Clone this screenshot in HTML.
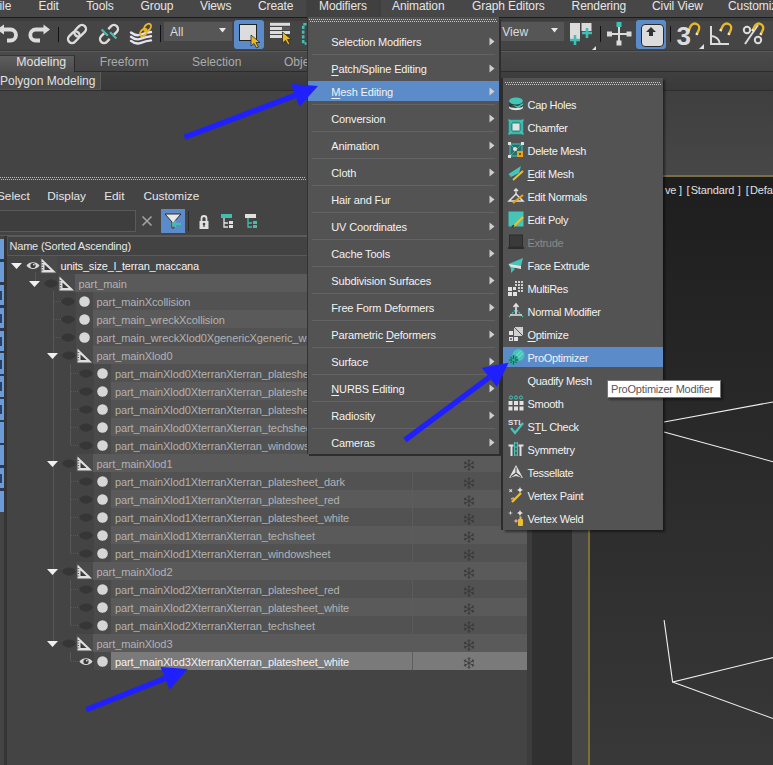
<!DOCTYPE html>
<html><head><meta charset="utf-8"><style>
html,body{margin:0;padding:0;}
body{width:773px;height:765px;overflow:hidden;position:relative;background:#444;font-family:"Liberation Sans", sans-serif;}
.t{position:absolute;white-space:nowrap;}
svg{overflow:visible;}
</style></head><body>
<div style="position:absolute;left:0px;top:0px;width:773px;height:765px;background:#444444;"></div>
<div style="position:absolute;left:0px;top:0px;width:773px;height:17px;background:#474747;"></div>
<div style="position:absolute;left:306px;top:0px;width:75px;height:17px;background:linear-gradient(90deg,#3f3f3f,#444 50%,#3f3f3f);"></div>
<div class="t" style="left:-7.7px;top:-0.16px;font-size:12px;line-height:12px;color:#e6e6e6;letter-spacing:-0.1px;">File</div>
<div class="t" style="left:38.5px;top:-0.16px;font-size:12px;line-height:12px;color:#e6e6e6;letter-spacing:-0.1px;">Edit</div>
<div class="t" style="left:86.2px;top:-0.16px;font-size:12px;line-height:12px;color:#e6e6e6;letter-spacing:-0.1px;">Tools</div>
<div class="t" style="left:140.5px;top:-0.16px;font-size:12px;line-height:12px;color:#e6e6e6;letter-spacing:-0.1px;">Group</div>
<div class="t" style="left:200px;top:-0.16px;font-size:12px;line-height:12px;color:#e6e6e6;letter-spacing:-0.1px;">Views</div>
<div class="t" style="left:258px;top:-0.16px;font-size:12px;line-height:12px;color:#e6e6e6;letter-spacing:-0.1px;">Create</div>
<div class="t" style="left:319px;top:-0.16px;font-size:12px;line-height:12px;color:#e6e6e6;letter-spacing:-0.1px;">Modifiers</div>
<div class="t" style="left:392px;top:-0.16px;font-size:12px;line-height:12px;color:#e6e6e6;letter-spacing:-0.1px;">Animation</div>
<div class="t" style="left:472px;top:-0.16px;font-size:12px;line-height:12px;color:#e6e6e6;letter-spacing:-0.1px;">Graph Editors</div>
<div class="t" style="left:571.6px;top:-0.16px;font-size:12px;line-height:12px;color:#e6e6e6;letter-spacing:-0.1px;">Rendering</div>
<div class="t" style="left:652px;top:-0.16px;font-size:12px;line-height:12px;color:#e6e6e6;letter-spacing:-0.1px;">Civil View</div>
<div class="t" style="left:728px;top:-0.16px;font-size:12px;line-height:12px;color:#e6e6e6;letter-spacing:-0.1px;">Customize</div>
<div style="position:absolute;left:0px;top:17px;width:773px;height:1px;background:#1c1c1c;"></div>
<div style="position:absolute;left:0px;top:18px;width:773px;height:33px;background:#454545;"></div>
<div style="position:absolute;left:0px;top:18px;width:773px;height:3px;background:#3d3d3d;"></div>
<div style="position:absolute;left:0px;top:50px;width:773px;height:1px;background:#3a3a3a;"></div>
<svg style="position:absolute;left:0px;top:18px;" width="60" height="33" viewBox="0 0 60 33"><path d="M3 11.5H10.5A5.5 5.5 0 0 1 10.5 22.5H7" stroke="#dcdcdc" stroke-width="3.8" fill="none"/><path d="M-3 11.5L4 6.5V16.5Z" fill="#dcdcdc"/><path d="M45 11.5H35.8A5.5 5.5 0 0 0 35.8 22.5H40" stroke="#dcdcdc" stroke-width="3.8" fill="none"/><path d="M50 11.5L43.5 6.5V16.5Z" fill="#dcdcdc"/></svg>
<div style="position:absolute;left:58px;top:27px;width:1px;height:15px;background:#111111;"></div>
<svg style="position:absolute;left:63px;top:20px;" width="28" height="28" viewBox="0 0 28 28"><g transform="rotate(-45 14 14)"><rect x="3" y="10" width="13" height="8" rx="4" stroke="#dcdcdc" stroke-width="2.4" fill="none"/><rect x="12" y="10" width="13" height="8" rx="4" stroke="#dcdcdc" stroke-width="2.4" fill="none"/></g></svg>
<svg style="position:absolute;left:95px;top:20px;" width="28" height="28" viewBox="0 0 28 28"><g transform="rotate(-45 14 14)"><path d="M11 10H7A4 4 0 0 0 7 18H11" stroke="#dcdcdc" stroke-width="2.4" fill="none"/><path d="M17 10H21A4 4 0 0 1 21 18H17" stroke="#dcdcdc" stroke-width="2.4" fill="none"/><path d="M12 5.5V14.5M16 13.5V22.5" stroke="#3fc0b2" stroke-width="2.2"/></g></svg>
<svg style="position:absolute;left:128px;top:18px;" width="26" height="28" viewBox="0 0 26 28"><g stroke="#e6e4f0" stroke-width="2.4" fill="none" stroke-linecap="round"><path d="M3 14.5Q8 18.5 13 16.5T23 14"/><path d="M3 18.7Q8 22.7 13 20.7T23 18.2"/><path d="M3 22.9Q8 26.9 13 24.9T23 22.4"/></g><g stroke="#e8b828" stroke-width="1.9" fill="none"><ellipse cx="15.5" cy="14.5" rx="2.8" ry="4.3" transform="rotate(40 15.5 14.5)"/><ellipse cx="19.5" cy="9.5" rx="2.8" ry="4.3" transform="rotate(40 19.5 9.5)"/></g></svg>
<div style="position:absolute;left:160px;top:25px;width:1px;height:17px;background:#111111;"></div>
<div style="position:absolute;left:164px;top:22px;width:68px;height:19px;background:#565656;"></div>
<div class="t" style="left:170px;top:25.84px;font-size:12px;line-height:12px;color:#dcdcdc;">All</div>
<svg style="position:absolute;left:219px;top:28px;" width="7" height="5" viewBox="0 0 7 5"><path d="M0 0H7L3.5 4.5Z" fill="#e8e8e8"/></svg>
<div style="position:absolute;left:234px;top:20px;width:30px;height:29px;background:#5b8cc9;border-radius:3px;"></div>
<div style="position:absolute;left:238.5px;top:23.5px;width:18.5px;height:17.5px;background:#dcdcdc;border:1.5px solid #222;box-sizing:border-box;"></div>
<svg style="position:absolute;left:251px;top:35px;" width="10" height="14" viewBox="0 0 10 14"><path d="M0 0L0 11L3 8.5L5.5 13L7.5 12L5 7.5L9 7.5Z" fill="#e8b828" stroke="#2a2a2a" stroke-width="0.8"/></svg>
<svg style="position:absolute;left:270px;top:22px;" width="22" height="24" viewBox="0 0 22 24"><g fill="#dcdcdc"><rect x="0" y="0.8" width="20" height="3"/><rect x="0" y="5" width="12" height="3"/><rect x="0" y="9" width="20" height="3"/><rect x="0" y="13" width="12" height="3"/></g><rect x="12" y="5" width="8" height="3" fill="#5a5a5a"/><g transform="translate(12.5 10)"><path d="M0 0L0 11L3 8.5L5.5 13L7.5 12L5 7.5L9 7.5Z" fill="#e8b828" stroke="#2a2a2a" stroke-width="0.8"/></g></svg>
<svg style="position:absolute;left:300px;top:22px;" width="8" height="24" viewBox="0 0 8 24"><path d="M6.5 2.2H3.2V21.5H6.5" stroke="#3fc0b2" stroke-width="2.6" stroke-dasharray="3.2 1.6" fill="none"/></svg>
<div style="position:absolute;left:499px;top:22px;width:65px;height:19px;background:#565656;"></div>
<div class="t" style="left:502.3px;top:25.84px;font-size:12px;line-height:12px;color:#dcdcdc;">View</div>
<svg style="position:absolute;left:551px;top:28px;" width="7" height="5" viewBox="0 0 7 5"><path d="M0 0H7L3.5 4.5Z" fill="#e8e8e8"/></svg>
<svg style="position:absolute;left:568px;top:22px;" width="32" height="28" viewBox="0 0 32 28"><rect x="2" y="1" width="10" height="16" fill="#dcdcdc"/><rect x="13.5" y="1" width="10" height="8" fill="#dcdcdc"/><path d="M7 13V23M2 18H12" stroke="#3fc0b2" stroke-width="2.6"/><path d="M19 6V16M14 11H24" stroke="#3fc0b2" stroke-width="2.6"/><path d="M28 24V28H24Z" fill="#e0e0e0"/></svg>
<div style="position:absolute;left:600px;top:26px;width:1px;height:16px;background:#111111;"></div>
<svg style="position:absolute;left:606px;top:21px;" width="26" height="26" viewBox="0 0 26 26"><path d="M13 4V21M3 13H23" stroke="#dcdcdc" stroke-width="2"/><rect x="10.5" y="1" width="5" height="5" fill="#3fc0b2"/><rect x="10.5" y="19.5" width="5" height="5" fill="#dcdcdc"/><rect x="1" y="10.5" width="5" height="5" fill="#dcdcdc"/><rect x="20.5" y="10.5" width="5" height="5" fill="#dcdcdc"/></svg>
<div style="position:absolute;left:636px;top:20px;width:30px;height:29px;background:#5b8cc9;border-radius:3px;"></div>
<div style="position:absolute;left:640.5px;top:24px;width:23px;height:22.5px;background:#dcdcdc;border:1.5px solid #2a2a2a;border-radius:4px;box-sizing:border-box;"></div>
<svg style="position:absolute;left:645px;top:27px;" width="12" height="10" viewBox="0 0 12 10"><path d="M6 0L11 5H8V9H4V5H1Z" fill="#333"/></svg>
<div style="position:absolute;left:670px;top:26px;width:1px;height:16px;background:#111111;"></div>
<div class="t" style="left:676.5px;top:22.79px;font-size:26px;line-height:26px;color:#dcdcdc;font-weight:bold;">3</div>
<svg style="position:absolute;left:688px;top:22px;" width="13" height="13" viewBox="0 0 13 13"><g transform="rotate(25 6.5 6.5)"><path d="M2 11V6A4.5 4.5 0 0 1 11 6V11" stroke="#e8b828" stroke-width="2.4" fill="none"/><path d="M2 9.5V11.5M11 9.5V11.5" stroke="#e8e8e8" stroke-width="2.4"/></g></svg>
<svg style="position:absolute;left:699px;top:44px;" width="5" height="5" viewBox="0 0 5 5"><path d="M5 0V5H0Z" fill="#e0e0e0"/></svg>
<svg style="position:absolute;left:709px;top:22px;" width="24" height="24" viewBox="0 0 24 24"><path d="M2 4V22H20" stroke="#dcdcdc" stroke-width="2" fill="none"/><path d="M2 14A9 9 0 0 1 11 22" stroke="#dcdcdc" stroke-width="2" fill="none"/></svg>
<svg style="position:absolute;left:720px;top:22px;" width="13" height="13" viewBox="0 0 13 13"><g transform="rotate(25 6.5 6.5)"><path d="M2 11V6A4.5 4.5 0 0 1 11 6V11" stroke="#e8b828" stroke-width="2.4" fill="none"/><path d="M2 9.5V11.5M11 9.5V11.5" stroke="#e8e8e8" stroke-width="2.4"/></g></svg>
<svg style="position:absolute;left:741px;top:22px;" width="26" height="24" viewBox="0 0 26 24"><circle cx="6" cy="8" r="3.2" stroke="#dcdcdc" stroke-width="2" fill="none"/><circle cx="17" cy="18" r="3.2" stroke="#dcdcdc" stroke-width="2" fill="none"/><path d="M4 22L17 3" stroke="#dcdcdc" stroke-width="2"/></svg>
<svg style="position:absolute;left:752px;top:22px;" width="13" height="13" viewBox="0 0 13 13"><g transform="rotate(25 6.5 6.5)"><path d="M2 11V6A4.5 4.5 0 0 1 11 6V11" stroke="#e8b828" stroke-width="2.4" fill="none"/><path d="M2 9.5V11.5M11 9.5V11.5" stroke="#e8e8e8" stroke-width="2.4"/></g></svg>
<div style="position:absolute;left:0px;top:51px;width:773px;height:1px;background:#5a5a5a;"></div>
<div style="position:absolute;left:0px;top:52px;width:773px;height:19px;background:linear-gradient(#4a4a4a,#444444);"></div>
<div style="position:absolute;left:0px;top:71px;width:773px;height:1px;background:#2c2c2c;"></div>
<div style="position:absolute;left:0px;top:54.5px;width:75px;height:17.5px;background:linear-gradient(#5e5e5e,#4c4c4c);border-right:1px solid #2a2a2a;border-top:1px solid #353535;box-sizing:border-box;"></div>
<div class="t" style="left:16.3px;top:55.99px;font-size:12.3px;line-height:12.3px;color:#e2e2e2;">Modeling</div>
<div class="t" style="left:99.8px;top:55.84px;font-size:12px;line-height:12px;color:#ababab;">Freeform</div>
<div class="t" style="left:192px;top:55.84px;font-size:12px;line-height:12px;color:#ababab;">Selection</div>
<div class="t" style="left:284px;top:55.84px;font-size:12px;line-height:12px;color:#ababab;">Object Paint</div>
<div style="position:absolute;left:0px;top:72px;width:773px;height:18px;background:linear-gradient(#3f3f3f,#393939);"></div>
<div style="position:absolute;left:0px;top:72px;width:100px;height:17px;background:#4a4a4a;border-right:1px solid #5c5c5c;border-bottom:1px solid #555;"></div>
<div class="t" style="left:0px;top:75.14px;font-size:12px;line-height:12px;color:#e2e2e2;">Polygon Modeling</div>
<div style="position:absolute;left:0px;top:90px;width:773px;height:1px;background:#2e2e2e;"></div>
<div style="position:absolute;left:0px;top:91px;width:773px;height:87px;background:#444444;"></div>
<div style="position:absolute;left:0;top:177px;width:306px;height:1px;background:repeating-linear-gradient(90deg,#bdbdbd 0 1px,transparent 1px 2px);"></div>
<div style="position:absolute;left:1px;top:179px;width:305px;height:1px;background:repeating-linear-gradient(90deg,#bdbdbd 0 1px,transparent 1px 2px);"></div>
<div class="t" style="left:-3px;top:191.01px;font-size:11.8px;line-height:11.8px;color:#e6e6e6;">Select</div>
<div class="t" style="left:47.3px;top:191.01px;font-size:11.8px;line-height:11.8px;color:#e6e6e6;">Display</div>
<div class="t" style="left:104.2px;top:191.01px;font-size:11.8px;line-height:11.8px;color:#e6e6e6;">Edit</div>
<div class="t" style="left:143.5px;top:191.01px;font-size:11.8px;line-height:11.8px;color:#e6e6e6;">Customize</div>
<div style="position:absolute;left:-2px;top:210px;width:138px;height:22px;background:#3e3e3e;border:1px solid #5a5a5a;box-sizing:border-box;"></div>
<svg style="position:absolute;left:140px;top:214px;" width="14" height="14" viewBox="0 0 14 14"><path d="M2.5 2.5L11.5 11.5M11.5 2.5L2.5 11.5" stroke="#a0a0a0" stroke-width="1.7"/></svg>
<div style="position:absolute;left:161px;top:209px;width:24px;height:24px;background:#5b8cc9;"></div>
<svg style="position:absolute;left:161px;top:209px;" width="24" height="24" viewBox="0 0 24 24"><path d="M4 5H20L13 13V19L11 19V13Z" fill="#e8e8e8" stroke="#2a2a2a" stroke-width="1"/><path d="M12 15H20M15 12L12 15L15 18" stroke="#3fbfb0" stroke-width="2" fill="none"/></svg>
<div style="position:absolute;left:188px;top:211px;width:1px;height:20px;background:#2a2a2a;"></div>
<svg style="position:absolute;left:197px;top:213px;" width="14" height="17" viewBox="0 0 14 17"><path d="M4.5 8V5.5a2.5 2.5 0 0 1 5 0V8" stroke="#e0e0e0" stroke-width="1.8" fill="none"/><rect x="2.5" y="8" width="9" height="8" fill="#e0e0e0"/><circle cx="7" cy="11" r="1.3" fill="#444"/><rect x="6.4" y="11" width="1.2" height="3" fill="#444"/></svg>
<svg style="position:absolute;left:219px;top:213px;" width="16" height="16" viewBox="0 0 16 16"><rect x="2" y="1" width="11" height="4" fill="#3fbfb0"/><path d="M5 5V14H9M5 10H9" stroke="#e0e0e0" stroke-width="1.3" fill="none"/><rect x="10" y="8" width="4" height="3" fill="#e0e0e0"/><rect x="10" y="12" width="4" height="3" fill="#e0e0e0"/></svg>
<svg style="position:absolute;left:243px;top:213px;" width="16" height="16" viewBox="0 0 16 16"><rect x="2" y="1" width="11" height="4" fill="#e0e0e0"/><path d="M5 5V14H9M5 10H9" stroke="#3fbfb0" stroke-width="1.3" fill="none"/><rect x="10" y="8" width="4" height="3" fill="#3fbfb0"/><rect x="10" y="12" width="4" height="3" fill="#3fbfb0"/></svg>
<div style="position:absolute;left:0px;top:235px;width:527px;height:1px;background:#5a5a5a;"></div>
<div style="position:absolute;left:0px;top:236px;width:7px;height:529px;background:#444444;"></div>
<div style="position:absolute;left:4px;top:236px;width:3px;height:529px;background:#353535;"></div>
<div style="position:absolute;left:0px;top:238.5px;width:4px;height:273.5px;background:#6b9bd8;"></div>
<div style="position:absolute;left:0px;top:259.3px;width:4px;height:2.6px;background:#2b3a50;"></div>
<div style="position:absolute;left:0px;top:282.2px;width:4px;height:2.6px;background:#2b3a50;"></div>
<div style="position:absolute;left:0px;top:305.1px;width:4px;height:2.6px;background:#2b3a50;"></div>
<div style="position:absolute;left:0px;top:328.0px;width:4px;height:2.6px;background:#2b3a50;"></div>
<div style="position:absolute;left:0px;top:350.9px;width:4px;height:2.6px;background:#2b3a50;"></div>
<div style="position:absolute;left:0px;top:373.8px;width:4px;height:2.6px;background:#2b3a50;"></div>
<div style="position:absolute;left:0px;top:396.7px;width:4px;height:2.6px;background:#2b3a50;"></div>
<div style="position:absolute;left:0px;top:419.6px;width:4px;height:2.6px;background:#2b3a50;"></div>
<div style="position:absolute;left:0px;top:442.5px;width:4px;height:2.6px;background:#2b3a50;"></div>
<div style="position:absolute;left:0px;top:465.4px;width:4px;height:2.6px;background:#2b3a50;"></div>
<div style="position:absolute;left:0px;top:488.3px;width:4px;height:2.6px;background:#2b3a50;"></div>
<div style="position:absolute;left:0px;top:290.79999999999995px;width:1.5px;height:9px;background:#2a4060;"></div>
<div style="position:absolute;left:0px;top:313.7px;width:1.5px;height:9px;background:#2a4060;"></div>
<div style="position:absolute;left:0px;top:336.59999999999997px;width:1.5px;height:9px;background:#2a4060;"></div>
<div style="position:absolute;left:0px;top:359.5px;width:1.5px;height:9px;background:#2a4060;"></div>
<div style="position:absolute;left:0px;top:382.4px;width:1.5px;height:9px;background:#2a4060;"></div>
<div style="position:absolute;left:0px;top:405.29999999999995px;width:1.5px;height:9px;background:#2a4060;"></div>
<div style="position:absolute;left:0px;top:474.0px;width:1.5px;height:9px;background:#2a4060;"></div>
<div style="position:absolute;left:7px;top:236px;width:520px;height:20px;background:#434343;border:1px solid #5a5a5a;border-left-color:#505050;box-sizing:border-box;"></div>
<div class="t" style="left:9.5px;top:241.09px;font-size:11px;line-height:11px;color:#e6e6e6;letter-spacing:-0.2px;">Name (Sorted Ascending)</div>
<div style="position:absolute;left:35px;top:272px;width:1px;height:9px;background:#575757;"></div>
<div style="position:absolute;left:52.5px;top:291px;width:1px;height:352px;background:#575757;"></div>
<div style="position:absolute;left:70px;top:364px;width:1px;height:81px;background:#575757;"></div>
<div style="position:absolute;left:70px;top:472px;width:1px;height:81px;background:#575757;"></div>
<div style="position:absolute;left:70px;top:580px;width:1px;height:45px;background:#575757;"></div>
<div style="position:absolute;left:70px;top:652px;width:1px;height:9px;background:#575757;"></div>
<div style="position:absolute;left:53.5px;top:301px;width:9px;height:1px;background:repeating-linear-gradient(90deg,#585858 0 1px,transparent 1px 2px)"></div>
<div style="position:absolute;left:53.5px;top:319px;width:9px;height:1px;background:repeating-linear-gradient(90deg,#585858 0 1px,transparent 1px 2px)"></div>
<div style="position:absolute;left:53.5px;top:337px;width:9px;height:1px;background:repeating-linear-gradient(90deg,#585858 0 1px,transparent 1px 2px)"></div>
<div style="position:absolute;left:71px;top:373px;width:9px;height:1px;background:repeating-linear-gradient(90deg,#585858 0 1px,transparent 1px 2px)"></div>
<div style="position:absolute;left:71px;top:391px;width:9px;height:1px;background:repeating-linear-gradient(90deg,#585858 0 1px,transparent 1px 2px)"></div>
<div style="position:absolute;left:71px;top:409px;width:9px;height:1px;background:repeating-linear-gradient(90deg,#585858 0 1px,transparent 1px 2px)"></div>
<div style="position:absolute;left:71px;top:427px;width:9px;height:1px;background:repeating-linear-gradient(90deg,#585858 0 1px,transparent 1px 2px)"></div>
<div style="position:absolute;left:71px;top:445px;width:9px;height:1px;background:repeating-linear-gradient(90deg,#585858 0 1px,transparent 1px 2px)"></div>
<div style="position:absolute;left:71px;top:481px;width:9px;height:1px;background:repeating-linear-gradient(90deg,#585858 0 1px,transparent 1px 2px)"></div>
<div style="position:absolute;left:71px;top:499px;width:9px;height:1px;background:repeating-linear-gradient(90deg,#585858 0 1px,transparent 1px 2px)"></div>
<div style="position:absolute;left:71px;top:517px;width:9px;height:1px;background:repeating-linear-gradient(90deg,#585858 0 1px,transparent 1px 2px)"></div>
<div style="position:absolute;left:71px;top:535px;width:9px;height:1px;background:repeating-linear-gradient(90deg,#585858 0 1px,transparent 1px 2px)"></div>
<div style="position:absolute;left:71px;top:553px;width:9px;height:1px;background:repeating-linear-gradient(90deg,#585858 0 1px,transparent 1px 2px)"></div>
<div style="position:absolute;left:71px;top:589px;width:9px;height:1px;background:repeating-linear-gradient(90deg,#585858 0 1px,transparent 1px 2px)"></div>
<div style="position:absolute;left:71px;top:607px;width:9px;height:1px;background:repeating-linear-gradient(90deg,#585858 0 1px,transparent 1px 2px)"></div>
<div style="position:absolute;left:71px;top:625px;width:9px;height:1px;background:repeating-linear-gradient(90deg,#585858 0 1px,transparent 1px 2px)"></div>
<div style="position:absolute;left:71px;top:661px;width:9px;height:1px;background:repeating-linear-gradient(90deg,#585858 0 1px,transparent 1px 2px)"></div>
<div style="position:absolute;left:40px;top:256px;width:17px;height:18px;background:#4a4a4a;"></div>
<div style="position:absolute;left:57px;top:256px;width:470px;height:18px;background:#474747;"></div>
<div class="t" style="left:60.5px;top:261.19px;font-size:11px;line-height:11px;color:#f2f2f2;letter-spacing:-0.17px;">units_size_l_terran_maccana</div>
<svg style="position:absolute;left:11px;top:263px;" width="11" height="6" viewBox="0 0 11 6"><path d="M0 0H11L5.5 6Z" fill="#f0f0f0"/></svg>
<svg style="position:absolute;left:26px;top:259px;" width="14" height="13" viewBox="0 0 14 13"><path d="M0.5 6.5C3 2 11 2 13.5 6.5C11 11 3 11 0.5 6.5Z" fill="#d8d8d8"/><circle cx="7" cy="6.5" r="2.6" fill="#3a3a3a"/><circle cx="7.8" cy="5.6" r="0.9" fill="#d8d8d8"/></svg>
<svg style="position:absolute;left:40.5px;top:258px;" width="16" height="15" viewBox="0 0 16 15"><path d="M0.5 0.5L15 14.5H0.5Z" fill="#e0e0e0"/><path d="M3.5 6.5L9.5 12H3.5Z" fill="#3a3a3a"/><path d="M0.5 4.5H2.2M0.5 7H2.2M0.5 9.5H2.2M0.5 12H2.2" stroke="#555" stroke-width="0.9"/></svg>
<div style="position:absolute;left:58px;top:274px;width:17px;height:18px;background:#4a4a4a;"></div>
<div style="position:absolute;left:75px;top:274px;width:452px;height:18px;background:#5a5a5a;"></div>
<svg style="position:absolute;left:462.5px;top:278.5px;" width="12" height="12" viewBox="0 0 12 12"><g stroke="#383838" stroke-width="0.85" fill="none"><path d="M6 0V12M0.8 3L11.2 9M0.8 9L11.2 3"/><path d="M4.5 1L6 2.5L7.5 1M4.5 11L6 9.5L7.5 11M1 5L3 4.3L2.4 2.3M11 7L9 7.7L9.6 9.7M1 7L3 7.7L2.4 9.7M11 5L9 4.3L9.6 2.3"/></g></svg>
<div class="t" style="left:78.5px;top:279.19px;font-size:11px;line-height:11px;color:#b2b2b2;letter-spacing:-0.08px;">part_main</div>
<svg style="position:absolute;left:29px;top:281px;" width="11" height="6" viewBox="0 0 11 6"><path d="M0 0H11L5.5 6Z" fill="#f0f0f0"/></svg>
<svg style="position:absolute;left:44px;top:277px;" width="14" height="13" viewBox="0 0 14 13"><path d="M0 6.5C2.5 1 11.5 1 14 6.5C11.5 12 2.5 12 0 6.5Z" fill="#363636"/></svg>
<svg style="position:absolute;left:58.5px;top:276px;" width="16" height="15" viewBox="0 0 16 15"><path d="M0.5 0.5L15 14.5H0.5Z" fill="#e0e0e0"/><path d="M3.5 6.5L9.5 12H3.5Z" fill="#3a3a3a"/><path d="M0.5 4.5H2.2M0.5 7H2.2M0.5 9.5H2.2M0.5 12H2.2" stroke="#555" stroke-width="0.9"/></svg>
<div style="position:absolute;left:76px;top:292px;width:17px;height:18px;background:#4a4a4a;"></div>
<div style="position:absolute;left:93px;top:292px;width:434px;height:18px;background:#525252;"></div>
<div style="position:absolute;left:411.5px;top:292px;width:1px;height:18px;background:#5c5c5c;"></div>
<svg style="position:absolute;left:462.5px;top:296.5px;" width="12" height="12" viewBox="0 0 12 12"><g stroke="#383838" stroke-width="0.85" fill="none"><path d="M6 0V12M0.8 3L11.2 9M0.8 9L11.2 3"/><path d="M4.5 1L6 2.5L7.5 1M4.5 11L6 9.5L7.5 11M1 5L3 4.3L2.4 2.3M11 7L9 7.7L9.6 9.7M1 7L3 7.7L2.4 9.7M11 5L9 4.3L9.6 2.3"/></g></svg>
<div class="t" style="left:96.5px;top:297.19px;font-size:11px;line-height:11px;color:#b2b2b2;letter-spacing:-0.08px;">part_mainXcollision</div>
<svg style="position:absolute;left:61px;top:295px;" width="14" height="13" viewBox="0 0 14 13"><path d="M0 6.5C2.5 1 11.5 1 14 6.5C11.5 12 2.5 12 0 6.5Z" fill="#363636"/></svg>
<svg style="position:absolute;left:78.5px;top:295.5px;" width="11" height="11" viewBox="0 0 11 11"><circle cx="5.5" cy="5.5" r="5.3" fill="#d6d6d6"/></svg>
<div style="position:absolute;left:76px;top:310px;width:17px;height:18px;background:#4a4a4a;"></div>
<div style="position:absolute;left:93px;top:310px;width:434px;height:18px;background:#5a5a5a;"></div>
<div style="position:absolute;left:411.5px;top:310px;width:1px;height:18px;background:#5c5c5c;"></div>
<svg style="position:absolute;left:462.5px;top:314.5px;" width="12" height="12" viewBox="0 0 12 12"><g stroke="#383838" stroke-width="0.85" fill="none"><path d="M6 0V12M0.8 3L11.2 9M0.8 9L11.2 3"/><path d="M4.5 1L6 2.5L7.5 1M4.5 11L6 9.5L7.5 11M1 5L3 4.3L2.4 2.3M11 7L9 7.7L9.6 9.7M1 7L3 7.7L2.4 9.7M11 5L9 4.3L9.6 2.3"/></g></svg>
<div class="t" style="left:96.5px;top:315.19px;font-size:11px;line-height:11px;color:#b2b2b2;letter-spacing:-0.08px;">part_main_wreckXcollision</div>
<svg style="position:absolute;left:61px;top:313px;" width="14" height="13" viewBox="0 0 14 13"><path d="M0 6.5C2.5 1 11.5 1 14 6.5C11.5 12 2.5 12 0 6.5Z" fill="#363636"/></svg>
<svg style="position:absolute;left:78.5px;top:313.5px;" width="11" height="11" viewBox="0 0 11 11"><circle cx="5.5" cy="5.5" r="5.3" fill="#d6d6d6"/></svg>
<div style="position:absolute;left:76px;top:328px;width:17px;height:18px;background:#4a4a4a;"></div>
<div style="position:absolute;left:93px;top:328px;width:434px;height:18px;background:#525252;"></div>
<div style="position:absolute;left:411.5px;top:328px;width:1px;height:18px;background:#5c5c5c;"></div>
<svg style="position:absolute;left:462.5px;top:332.5px;" width="12" height="12" viewBox="0 0 12 12"><g stroke="#383838" stroke-width="0.85" fill="none"><path d="M6 0V12M0.8 3L11.2 9M0.8 9L11.2 3"/><path d="M4.5 1L6 2.5L7.5 1M4.5 11L6 9.5L7.5 11M1 5L3 4.3L2.4 2.3M11 7L9 7.7L9.6 9.7M1 7L3 7.7L2.4 9.7M11 5L9 4.3L9.6 2.3"/></g></svg>
<div class="t" style="left:96.5px;top:333.19px;font-size:11px;line-height:11px;color:#b2b2b2;letter-spacing:-0.08px;">part_main_wreckXlod0XgenericXgeneric_wreck</div>
<svg style="position:absolute;left:61px;top:331px;" width="14" height="13" viewBox="0 0 14 13"><path d="M0 6.5C2.5 1 11.5 1 14 6.5C11.5 12 2.5 12 0 6.5Z" fill="#363636"/></svg>
<svg style="position:absolute;left:78.5px;top:331.5px;" width="11" height="11" viewBox="0 0 11 11"><circle cx="5.5" cy="5.5" r="5.3" fill="#d6d6d6"/></svg>
<div style="position:absolute;left:76px;top:346px;width:17px;height:18px;background:#4a4a4a;"></div>
<div style="position:absolute;left:93px;top:346px;width:434px;height:18px;background:#5a5a5a;"></div>
<svg style="position:absolute;left:462.5px;top:350.5px;" width="12" height="12" viewBox="0 0 12 12"><g stroke="#383838" stroke-width="0.85" fill="none"><path d="M6 0V12M0.8 3L11.2 9M0.8 9L11.2 3"/><path d="M4.5 1L6 2.5L7.5 1M4.5 11L6 9.5L7.5 11M1 5L3 4.3L2.4 2.3M11 7L9 7.7L9.6 9.7M1 7L3 7.7L2.4 9.7M11 5L9 4.3L9.6 2.3"/></g></svg>
<div class="t" style="left:96.5px;top:351.19px;font-size:11px;line-height:11px;color:#b2b2b2;letter-spacing:-0.08px;">part_mainXlod0</div>
<svg style="position:absolute;left:47px;top:353px;" width="11" height="6" viewBox="0 0 11 6"><path d="M0 0H11L5.5 6Z" fill="#f0f0f0"/></svg>
<svg style="position:absolute;left:62px;top:349px;" width="14" height="13" viewBox="0 0 14 13"><path d="M0 6.5C2.5 1 11.5 1 14 6.5C11.5 12 2.5 12 0 6.5Z" fill="#363636"/></svg>
<svg style="position:absolute;left:76.5px;top:348px;" width="16" height="15" viewBox="0 0 16 15"><path d="M0.5 0.5L15 14.5H0.5Z" fill="#e0e0e0"/><path d="M3.5 6.5L9.5 12H3.5Z" fill="#3a3a3a"/><path d="M0.5 4.5H2.2M0.5 7H2.2M0.5 9.5H2.2M0.5 12H2.2" stroke="#555" stroke-width="0.9"/></svg>
<div style="position:absolute;left:94.4px;top:364px;width:17px;height:18px;background:#4a4a4a;"></div>
<div style="position:absolute;left:111.4px;top:364px;width:415.6px;height:18px;background:#525252;"></div>
<div style="position:absolute;left:411.5px;top:364px;width:1px;height:18px;background:#5c5c5c;"></div>
<svg style="position:absolute;left:462.5px;top:368.5px;" width="12" height="12" viewBox="0 0 12 12"><g stroke="#383838" stroke-width="0.85" fill="none"><path d="M6 0V12M0.8 3L11.2 9M0.8 9L11.2 3"/><path d="M4.5 1L6 2.5L7.5 1M4.5 11L6 9.5L7.5 11M1 5L3 4.3L2.4 2.3M11 7L9 7.7L9.6 9.7M1 7L3 7.7L2.4 9.7M11 5L9 4.3L9.6 2.3"/></g></svg>
<div class="t" style="left:114.9px;top:369.19px;font-size:11px;line-height:11px;color:#b2b2b2;letter-spacing:-0.08px;">part_mainXlod0XterranXterran_platesheet_dark</div>
<svg style="position:absolute;left:79.4px;top:367px;" width="14" height="13" viewBox="0 0 14 13"><path d="M0 6.5C2.5 1 11.5 1 14 6.5C11.5 12 2.5 12 0 6.5Z" fill="#363636"/></svg>
<svg style="position:absolute;left:96.9px;top:367.5px;" width="11" height="11" viewBox="0 0 11 11"><circle cx="5.5" cy="5.5" r="5.3" fill="#d6d6d6"/></svg>
<div style="position:absolute;left:94.4px;top:382px;width:17px;height:18px;background:#4a4a4a;"></div>
<div style="position:absolute;left:111.4px;top:382px;width:415.6px;height:18px;background:#5a5a5a;"></div>
<div style="position:absolute;left:411.5px;top:382px;width:1px;height:18px;background:#5c5c5c;"></div>
<svg style="position:absolute;left:462.5px;top:386.5px;" width="12" height="12" viewBox="0 0 12 12"><g stroke="#383838" stroke-width="0.85" fill="none"><path d="M6 0V12M0.8 3L11.2 9M0.8 9L11.2 3"/><path d="M4.5 1L6 2.5L7.5 1M4.5 11L6 9.5L7.5 11M1 5L3 4.3L2.4 2.3M11 7L9 7.7L9.6 9.7M1 7L3 7.7L2.4 9.7M11 5L9 4.3L9.6 2.3"/></g></svg>
<div class="t" style="left:114.9px;top:387.19px;font-size:11px;line-height:11px;color:#b2b2b2;letter-spacing:-0.08px;">part_mainXlod0XterranXterran_platesheet_red</div>
<svg style="position:absolute;left:79.4px;top:385px;" width="14" height="13" viewBox="0 0 14 13"><path d="M0 6.5C2.5 1 11.5 1 14 6.5C11.5 12 2.5 12 0 6.5Z" fill="#363636"/></svg>
<svg style="position:absolute;left:96.9px;top:385.5px;" width="11" height="11" viewBox="0 0 11 11"><circle cx="5.5" cy="5.5" r="5.3" fill="#d6d6d6"/></svg>
<div style="position:absolute;left:94.4px;top:400px;width:17px;height:18px;background:#4a4a4a;"></div>
<div style="position:absolute;left:111.4px;top:400px;width:415.6px;height:18px;background:#525252;"></div>
<div style="position:absolute;left:411.5px;top:400px;width:1px;height:18px;background:#5c5c5c;"></div>
<svg style="position:absolute;left:462.5px;top:404.5px;" width="12" height="12" viewBox="0 0 12 12"><g stroke="#383838" stroke-width="0.85" fill="none"><path d="M6 0V12M0.8 3L11.2 9M0.8 9L11.2 3"/><path d="M4.5 1L6 2.5L7.5 1M4.5 11L6 9.5L7.5 11M1 5L3 4.3L2.4 2.3M11 7L9 7.7L9.6 9.7M1 7L3 7.7L2.4 9.7M11 5L9 4.3L9.6 2.3"/></g></svg>
<div class="t" style="left:114.9px;top:405.19px;font-size:11px;line-height:11px;color:#b2b2b2;letter-spacing:-0.08px;">part_mainXlod0XterranXterran_platesheet_white</div>
<svg style="position:absolute;left:79.4px;top:403px;" width="14" height="13" viewBox="0 0 14 13"><path d="M0 6.5C2.5 1 11.5 1 14 6.5C11.5 12 2.5 12 0 6.5Z" fill="#363636"/></svg>
<svg style="position:absolute;left:96.9px;top:403.5px;" width="11" height="11" viewBox="0 0 11 11"><circle cx="5.5" cy="5.5" r="5.3" fill="#d6d6d6"/></svg>
<div style="position:absolute;left:94.4px;top:418px;width:17px;height:18px;background:#4a4a4a;"></div>
<div style="position:absolute;left:111.4px;top:418px;width:415.6px;height:18px;background:#5a5a5a;"></div>
<div style="position:absolute;left:411.5px;top:418px;width:1px;height:18px;background:#5c5c5c;"></div>
<svg style="position:absolute;left:462.5px;top:422.5px;" width="12" height="12" viewBox="0 0 12 12"><g stroke="#383838" stroke-width="0.85" fill="none"><path d="M6 0V12M0.8 3L11.2 9M0.8 9L11.2 3"/><path d="M4.5 1L6 2.5L7.5 1M4.5 11L6 9.5L7.5 11M1 5L3 4.3L2.4 2.3M11 7L9 7.7L9.6 9.7M1 7L3 7.7L2.4 9.7M11 5L9 4.3L9.6 2.3"/></g></svg>
<div class="t" style="left:114.9px;top:423.19px;font-size:11px;line-height:11px;color:#b2b2b2;letter-spacing:-0.08px;">part_mainXlod0XterranXterran_techsheet</div>
<svg style="position:absolute;left:79.4px;top:421px;" width="14" height="13" viewBox="0 0 14 13"><path d="M0 6.5C2.5 1 11.5 1 14 6.5C11.5 12 2.5 12 0 6.5Z" fill="#363636"/></svg>
<svg style="position:absolute;left:96.9px;top:421.5px;" width="11" height="11" viewBox="0 0 11 11"><circle cx="5.5" cy="5.5" r="5.3" fill="#d6d6d6"/></svg>
<div style="position:absolute;left:94.4px;top:436px;width:17px;height:18px;background:#4a4a4a;"></div>
<div style="position:absolute;left:111.4px;top:436px;width:415.6px;height:18px;background:#525252;"></div>
<div style="position:absolute;left:411.5px;top:436px;width:1px;height:18px;background:#5c5c5c;"></div>
<svg style="position:absolute;left:462.5px;top:440.5px;" width="12" height="12" viewBox="0 0 12 12"><g stroke="#383838" stroke-width="0.85" fill="none"><path d="M6 0V12M0.8 3L11.2 9M0.8 9L11.2 3"/><path d="M4.5 1L6 2.5L7.5 1M4.5 11L6 9.5L7.5 11M1 5L3 4.3L2.4 2.3M11 7L9 7.7L9.6 9.7M1 7L3 7.7L2.4 9.7M11 5L9 4.3L9.6 2.3"/></g></svg>
<div class="t" style="left:114.9px;top:441.19px;font-size:11px;line-height:11px;color:#b2b2b2;letter-spacing:-0.08px;">part_mainXlod0XterranXterran_windowsheet</div>
<svg style="position:absolute;left:79.4px;top:439px;" width="14" height="13" viewBox="0 0 14 13"><path d="M0 6.5C2.5 1 11.5 1 14 6.5C11.5 12 2.5 12 0 6.5Z" fill="#363636"/></svg>
<svg style="position:absolute;left:96.9px;top:439.5px;" width="11" height="11" viewBox="0 0 11 11"><circle cx="5.5" cy="5.5" r="5.3" fill="#d6d6d6"/></svg>
<div style="position:absolute;left:76px;top:454px;width:17px;height:18px;background:#4a4a4a;"></div>
<div style="position:absolute;left:93px;top:454px;width:434px;height:18px;background:#5a5a5a;"></div>
<svg style="position:absolute;left:462.5px;top:458.5px;" width="12" height="12" viewBox="0 0 12 12"><g stroke="#383838" stroke-width="0.85" fill="none"><path d="M6 0V12M0.8 3L11.2 9M0.8 9L11.2 3"/><path d="M4.5 1L6 2.5L7.5 1M4.5 11L6 9.5L7.5 11M1 5L3 4.3L2.4 2.3M11 7L9 7.7L9.6 9.7M1 7L3 7.7L2.4 9.7M11 5L9 4.3L9.6 2.3"/></g></svg>
<div class="t" style="left:96.5px;top:459.19px;font-size:11px;line-height:11px;color:#b2b2b2;letter-spacing:-0.08px;">part_mainXlod1</div>
<svg style="position:absolute;left:47px;top:461px;" width="11" height="6" viewBox="0 0 11 6"><path d="M0 0H11L5.5 6Z" fill="#f0f0f0"/></svg>
<svg style="position:absolute;left:62px;top:457px;" width="14" height="13" viewBox="0 0 14 13"><path d="M0 6.5C2.5 1 11.5 1 14 6.5C11.5 12 2.5 12 0 6.5Z" fill="#363636"/></svg>
<svg style="position:absolute;left:76.5px;top:456px;" width="16" height="15" viewBox="0 0 16 15"><path d="M0.5 0.5L15 14.5H0.5Z" fill="#e0e0e0"/><path d="M3.5 6.5L9.5 12H3.5Z" fill="#3a3a3a"/><path d="M0.5 4.5H2.2M0.5 7H2.2M0.5 9.5H2.2M0.5 12H2.2" stroke="#555" stroke-width="0.9"/></svg>
<div style="position:absolute;left:94.4px;top:472px;width:17px;height:18px;background:#4a4a4a;"></div>
<div style="position:absolute;left:111.4px;top:472px;width:415.6px;height:18px;background:#525252;"></div>
<div style="position:absolute;left:411.5px;top:472px;width:1px;height:18px;background:#5c5c5c;"></div>
<svg style="position:absolute;left:462.5px;top:476.5px;" width="12" height="12" viewBox="0 0 12 12"><g stroke="#383838" stroke-width="0.85" fill="none"><path d="M6 0V12M0.8 3L11.2 9M0.8 9L11.2 3"/><path d="M4.5 1L6 2.5L7.5 1M4.5 11L6 9.5L7.5 11M1 5L3 4.3L2.4 2.3M11 7L9 7.7L9.6 9.7M1 7L3 7.7L2.4 9.7M11 5L9 4.3L9.6 2.3"/></g></svg>
<div class="t" style="left:114.9px;top:477.19px;font-size:11px;line-height:11px;color:#b2b2b2;letter-spacing:-0.08px;">part_mainXlod1XterranXterran_platesheet_dark</div>
<svg style="position:absolute;left:79.4px;top:475px;" width="14" height="13" viewBox="0 0 14 13"><path d="M0 6.5C2.5 1 11.5 1 14 6.5C11.5 12 2.5 12 0 6.5Z" fill="#363636"/></svg>
<svg style="position:absolute;left:96.9px;top:475.5px;" width="11" height="11" viewBox="0 0 11 11"><circle cx="5.5" cy="5.5" r="5.3" fill="#d6d6d6"/></svg>
<div style="position:absolute;left:94.4px;top:490px;width:17px;height:18px;background:#4a4a4a;"></div>
<div style="position:absolute;left:111.4px;top:490px;width:415.6px;height:18px;background:#5a5a5a;"></div>
<div style="position:absolute;left:411.5px;top:490px;width:1px;height:18px;background:#5c5c5c;"></div>
<svg style="position:absolute;left:462.5px;top:494.5px;" width="12" height="12" viewBox="0 0 12 12"><g stroke="#383838" stroke-width="0.85" fill="none"><path d="M6 0V12M0.8 3L11.2 9M0.8 9L11.2 3"/><path d="M4.5 1L6 2.5L7.5 1M4.5 11L6 9.5L7.5 11M1 5L3 4.3L2.4 2.3M11 7L9 7.7L9.6 9.7M1 7L3 7.7L2.4 9.7M11 5L9 4.3L9.6 2.3"/></g></svg>
<div class="t" style="left:114.9px;top:495.19px;font-size:11px;line-height:11px;color:#b2b2b2;letter-spacing:-0.08px;">part_mainXlod1XterranXterran_platesheet_red</div>
<svg style="position:absolute;left:79.4px;top:493px;" width="14" height="13" viewBox="0 0 14 13"><path d="M0 6.5C2.5 1 11.5 1 14 6.5C11.5 12 2.5 12 0 6.5Z" fill="#363636"/></svg>
<svg style="position:absolute;left:96.9px;top:493.5px;" width="11" height="11" viewBox="0 0 11 11"><circle cx="5.5" cy="5.5" r="5.3" fill="#d6d6d6"/></svg>
<div style="position:absolute;left:94.4px;top:508px;width:17px;height:18px;background:#4a4a4a;"></div>
<div style="position:absolute;left:111.4px;top:508px;width:415.6px;height:18px;background:#525252;"></div>
<div style="position:absolute;left:411.5px;top:508px;width:1px;height:18px;background:#5c5c5c;"></div>
<svg style="position:absolute;left:462.5px;top:512.5px;" width="12" height="12" viewBox="0 0 12 12"><g stroke="#383838" stroke-width="0.85" fill="none"><path d="M6 0V12M0.8 3L11.2 9M0.8 9L11.2 3"/><path d="M4.5 1L6 2.5L7.5 1M4.5 11L6 9.5L7.5 11M1 5L3 4.3L2.4 2.3M11 7L9 7.7L9.6 9.7M1 7L3 7.7L2.4 9.7M11 5L9 4.3L9.6 2.3"/></g></svg>
<div class="t" style="left:114.9px;top:513.19px;font-size:11px;line-height:11px;color:#b2b2b2;letter-spacing:-0.08px;">part_mainXlod1XterranXterran_platesheet_white</div>
<svg style="position:absolute;left:79.4px;top:511px;" width="14" height="13" viewBox="0 0 14 13"><path d="M0 6.5C2.5 1 11.5 1 14 6.5C11.5 12 2.5 12 0 6.5Z" fill="#363636"/></svg>
<svg style="position:absolute;left:96.9px;top:511.5px;" width="11" height="11" viewBox="0 0 11 11"><circle cx="5.5" cy="5.5" r="5.3" fill="#d6d6d6"/></svg>
<div style="position:absolute;left:94.4px;top:526px;width:17px;height:18px;background:#4a4a4a;"></div>
<div style="position:absolute;left:111.4px;top:526px;width:415.6px;height:18px;background:#5a5a5a;"></div>
<div style="position:absolute;left:411.5px;top:526px;width:1px;height:18px;background:#5c5c5c;"></div>
<svg style="position:absolute;left:462.5px;top:530.5px;" width="12" height="12" viewBox="0 0 12 12"><g stroke="#383838" stroke-width="0.85" fill="none"><path d="M6 0V12M0.8 3L11.2 9M0.8 9L11.2 3"/><path d="M4.5 1L6 2.5L7.5 1M4.5 11L6 9.5L7.5 11M1 5L3 4.3L2.4 2.3M11 7L9 7.7L9.6 9.7M1 7L3 7.7L2.4 9.7M11 5L9 4.3L9.6 2.3"/></g></svg>
<div class="t" style="left:114.9px;top:531.19px;font-size:11px;line-height:11px;color:#b2b2b2;letter-spacing:-0.08px;">part_mainXlod1XterranXterran_techsheet</div>
<svg style="position:absolute;left:79.4px;top:529px;" width="14" height="13" viewBox="0 0 14 13"><path d="M0 6.5C2.5 1 11.5 1 14 6.5C11.5 12 2.5 12 0 6.5Z" fill="#363636"/></svg>
<svg style="position:absolute;left:96.9px;top:529.5px;" width="11" height="11" viewBox="0 0 11 11"><circle cx="5.5" cy="5.5" r="5.3" fill="#d6d6d6"/></svg>
<div style="position:absolute;left:94.4px;top:544px;width:17px;height:18px;background:#4a4a4a;"></div>
<div style="position:absolute;left:111.4px;top:544px;width:415.6px;height:18px;background:#525252;"></div>
<div style="position:absolute;left:411.5px;top:544px;width:1px;height:18px;background:#5c5c5c;"></div>
<svg style="position:absolute;left:462.5px;top:548.5px;" width="12" height="12" viewBox="0 0 12 12"><g stroke="#383838" stroke-width="0.85" fill="none"><path d="M6 0V12M0.8 3L11.2 9M0.8 9L11.2 3"/><path d="M4.5 1L6 2.5L7.5 1M4.5 11L6 9.5L7.5 11M1 5L3 4.3L2.4 2.3M11 7L9 7.7L9.6 9.7M1 7L3 7.7L2.4 9.7M11 5L9 4.3L9.6 2.3"/></g></svg>
<div class="t" style="left:114.9px;top:549.19px;font-size:11px;line-height:11px;color:#b2b2b2;letter-spacing:-0.08px;">part_mainXlod1XterranXterran_windowsheet</div>
<svg style="position:absolute;left:79.4px;top:547px;" width="14" height="13" viewBox="0 0 14 13"><path d="M0 6.5C2.5 1 11.5 1 14 6.5C11.5 12 2.5 12 0 6.5Z" fill="#363636"/></svg>
<svg style="position:absolute;left:96.9px;top:547.5px;" width="11" height="11" viewBox="0 0 11 11"><circle cx="5.5" cy="5.5" r="5.3" fill="#d6d6d6"/></svg>
<div style="position:absolute;left:76px;top:562px;width:17px;height:18px;background:#4a4a4a;"></div>
<div style="position:absolute;left:93px;top:562px;width:434px;height:18px;background:#5a5a5a;"></div>
<svg style="position:absolute;left:462.5px;top:566.5px;" width="12" height="12" viewBox="0 0 12 12"><g stroke="#383838" stroke-width="0.85" fill="none"><path d="M6 0V12M0.8 3L11.2 9M0.8 9L11.2 3"/><path d="M4.5 1L6 2.5L7.5 1M4.5 11L6 9.5L7.5 11M1 5L3 4.3L2.4 2.3M11 7L9 7.7L9.6 9.7M1 7L3 7.7L2.4 9.7M11 5L9 4.3L9.6 2.3"/></g></svg>
<div class="t" style="left:96.5px;top:567.19px;font-size:11px;line-height:11px;color:#b2b2b2;letter-spacing:-0.08px;">part_mainXlod2</div>
<svg style="position:absolute;left:47px;top:569px;" width="11" height="6" viewBox="0 0 11 6"><path d="M0 0H11L5.5 6Z" fill="#f0f0f0"/></svg>
<svg style="position:absolute;left:62px;top:565px;" width="14" height="13" viewBox="0 0 14 13"><path d="M0 6.5C2.5 1 11.5 1 14 6.5C11.5 12 2.5 12 0 6.5Z" fill="#363636"/></svg>
<svg style="position:absolute;left:76.5px;top:564px;" width="16" height="15" viewBox="0 0 16 15"><path d="M0.5 0.5L15 14.5H0.5Z" fill="#e0e0e0"/><path d="M3.5 6.5L9.5 12H3.5Z" fill="#3a3a3a"/><path d="M0.5 4.5H2.2M0.5 7H2.2M0.5 9.5H2.2M0.5 12H2.2" stroke="#555" stroke-width="0.9"/></svg>
<div style="position:absolute;left:94.4px;top:580px;width:17px;height:18px;background:#4a4a4a;"></div>
<div style="position:absolute;left:111.4px;top:580px;width:415.6px;height:18px;background:#525252;"></div>
<div style="position:absolute;left:411.5px;top:580px;width:1px;height:18px;background:#5c5c5c;"></div>
<svg style="position:absolute;left:462.5px;top:584.5px;" width="12" height="12" viewBox="0 0 12 12"><g stroke="#383838" stroke-width="0.85" fill="none"><path d="M6 0V12M0.8 3L11.2 9M0.8 9L11.2 3"/><path d="M4.5 1L6 2.5L7.5 1M4.5 11L6 9.5L7.5 11M1 5L3 4.3L2.4 2.3M11 7L9 7.7L9.6 9.7M1 7L3 7.7L2.4 9.7M11 5L9 4.3L9.6 2.3"/></g></svg>
<div class="t" style="left:114.9px;top:585.19px;font-size:11px;line-height:11px;color:#b2b2b2;letter-spacing:-0.08px;">part_mainXlod2XterranXterran_platesheet_red</div>
<svg style="position:absolute;left:79.4px;top:583px;" width="14" height="13" viewBox="0 0 14 13"><path d="M0 6.5C2.5 1 11.5 1 14 6.5C11.5 12 2.5 12 0 6.5Z" fill="#363636"/></svg>
<svg style="position:absolute;left:96.9px;top:583.5px;" width="11" height="11" viewBox="0 0 11 11"><circle cx="5.5" cy="5.5" r="5.3" fill="#d6d6d6"/></svg>
<div style="position:absolute;left:94.4px;top:598px;width:17px;height:18px;background:#4a4a4a;"></div>
<div style="position:absolute;left:111.4px;top:598px;width:415.6px;height:18px;background:#5a5a5a;"></div>
<div style="position:absolute;left:411.5px;top:598px;width:1px;height:18px;background:#5c5c5c;"></div>
<svg style="position:absolute;left:462.5px;top:602.5px;" width="12" height="12" viewBox="0 0 12 12"><g stroke="#383838" stroke-width="0.85" fill="none"><path d="M6 0V12M0.8 3L11.2 9M0.8 9L11.2 3"/><path d="M4.5 1L6 2.5L7.5 1M4.5 11L6 9.5L7.5 11M1 5L3 4.3L2.4 2.3M11 7L9 7.7L9.6 9.7M1 7L3 7.7L2.4 9.7M11 5L9 4.3L9.6 2.3"/></g></svg>
<div class="t" style="left:114.9px;top:603.19px;font-size:11px;line-height:11px;color:#b2b2b2;letter-spacing:-0.08px;">part_mainXlod2XterranXterran_platesheet_white</div>
<svg style="position:absolute;left:79.4px;top:601px;" width="14" height="13" viewBox="0 0 14 13"><path d="M0 6.5C2.5 1 11.5 1 14 6.5C11.5 12 2.5 12 0 6.5Z" fill="#363636"/></svg>
<svg style="position:absolute;left:96.9px;top:601.5px;" width="11" height="11" viewBox="0 0 11 11"><circle cx="5.5" cy="5.5" r="5.3" fill="#d6d6d6"/></svg>
<div style="position:absolute;left:94.4px;top:616px;width:17px;height:18px;background:#4a4a4a;"></div>
<div style="position:absolute;left:111.4px;top:616px;width:415.6px;height:18px;background:#525252;"></div>
<div style="position:absolute;left:411.5px;top:616px;width:1px;height:18px;background:#5c5c5c;"></div>
<svg style="position:absolute;left:462.5px;top:620.5px;" width="12" height="12" viewBox="0 0 12 12"><g stroke="#383838" stroke-width="0.85" fill="none"><path d="M6 0V12M0.8 3L11.2 9M0.8 9L11.2 3"/><path d="M4.5 1L6 2.5L7.5 1M4.5 11L6 9.5L7.5 11M1 5L3 4.3L2.4 2.3M11 7L9 7.7L9.6 9.7M1 7L3 7.7L2.4 9.7M11 5L9 4.3L9.6 2.3"/></g></svg>
<div class="t" style="left:114.9px;top:621.19px;font-size:11px;line-height:11px;color:#b2b2b2;letter-spacing:-0.08px;">part_mainXlod2XterranXterran_techsheet</div>
<svg style="position:absolute;left:79.4px;top:619px;" width="14" height="13" viewBox="0 0 14 13"><path d="M0 6.5C2.5 1 11.5 1 14 6.5C11.5 12 2.5 12 0 6.5Z" fill="#363636"/></svg>
<svg style="position:absolute;left:96.9px;top:619.5px;" width="11" height="11" viewBox="0 0 11 11"><circle cx="5.5" cy="5.5" r="5.3" fill="#d6d6d6"/></svg>
<div style="position:absolute;left:76px;top:634px;width:17px;height:18px;background:#4a4a4a;"></div>
<div style="position:absolute;left:93px;top:634px;width:434px;height:18px;background:#5a5a5a;"></div>
<svg style="position:absolute;left:462.5px;top:638.5px;" width="12" height="12" viewBox="0 0 12 12"><g stroke="#383838" stroke-width="0.85" fill="none"><path d="M6 0V12M0.8 3L11.2 9M0.8 9L11.2 3"/><path d="M4.5 1L6 2.5L7.5 1M4.5 11L6 9.5L7.5 11M1 5L3 4.3L2.4 2.3M11 7L9 7.7L9.6 9.7M1 7L3 7.7L2.4 9.7M11 5L9 4.3L9.6 2.3"/></g></svg>
<div class="t" style="left:96.5px;top:639.19px;font-size:11px;line-height:11px;color:#b2b2b2;letter-spacing:-0.08px;">part_mainXlod3</div>
<svg style="position:absolute;left:47px;top:641px;" width="11" height="6" viewBox="0 0 11 6"><path d="M0 0H11L5.5 6Z" fill="#f0f0f0"/></svg>
<svg style="position:absolute;left:62px;top:637px;" width="14" height="13" viewBox="0 0 14 13"><path d="M0 6.5C2.5 1 11.5 1 14 6.5C11.5 12 2.5 12 0 6.5Z" fill="#363636"/></svg>
<svg style="position:absolute;left:76.5px;top:636px;" width="16" height="15" viewBox="0 0 16 15"><path d="M0.5 0.5L15 14.5H0.5Z" fill="#e0e0e0"/><path d="M3.5 6.5L9.5 12H3.5Z" fill="#3a3a3a"/><path d="M0.5 4.5H2.2M0.5 7H2.2M0.5 9.5H2.2M0.5 12H2.2" stroke="#555" stroke-width="0.9"/></svg>
<div style="position:absolute;left:94.4px;top:652px;width:17px;height:18px;background:#4a4a4a;"></div>
<div style="position:absolute;left:111.4px;top:652px;width:415.6px;height:18px;background:#7a7a7a;"></div>
<div style="position:absolute;left:411.5px;top:652px;width:1px;height:18px;background:#5e5e5e;"></div>
<svg style="position:absolute;left:462.5px;top:656.5px;" width="12" height="12" viewBox="0 0 12 12"><g stroke="#383838" stroke-width="0.85" fill="none"><path d="M6 0V12M0.8 3L11.2 9M0.8 9L11.2 3"/><path d="M4.5 1L6 2.5L7.5 1M4.5 11L6 9.5L7.5 11M1 5L3 4.3L2.4 2.3M11 7L9 7.7L9.6 9.7M1 7L3 7.7L2.4 9.7M11 5L9 4.3L9.6 2.3"/></g></svg>
<div class="t" style="left:114.9px;top:657.19px;font-size:11px;line-height:11px;color:#f2f2f2;letter-spacing:-0.08px;">part_mainXlod3XterranXterran_platesheet_white</div>
<svg style="position:absolute;left:79.4px;top:655px;" width="14" height="13" viewBox="0 0 14 13"><path d="M0.5 6.5C3 2 11 2 13.5 6.5C11 11 3 11 0.5 6.5Z" fill="#d8d8d8"/><circle cx="7" cy="6.5" r="2.6" fill="#3a3a3a"/><circle cx="7.8" cy="5.6" r="0.9" fill="#d8d8d8"/></svg>
<svg style="position:absolute;left:96.9px;top:655.5px;" width="11" height="11" viewBox="0 0 11 11"><circle cx="5.5" cy="5.5" r="5.3" fill="#d6d6d6"/></svg>
<div style="position:absolute;left:527px;top:91px;width:246px;height:674px;background:#444444;"></div>
<div style="position:absolute;left:527px;top:236px;width:5px;height:529px;background:#3c3c3c;"></div>
<div style="position:absolute;left:532px;top:236px;width:40px;height:529px;background:#303030;"></div>
<div style="position:absolute;left:572px;top:236px;width:16px;height:529px;background:#464646;"></div>
<div style="position:absolute;left:588px;top:177px;width:1.5px;height:588px;background:#7d6e32;"></div>
<div style="position:absolute;left:590px;top:91px;width:183px;height:85px;background:linear-gradient(#3f3f3f,#474747);"></div>
<div style="position:absolute;left:588px;top:175px;width:185px;height:2px;background:#7a7048;"></div>
<div style="position:absolute;left:590px;top:177px;width:183px;height:588px;background:linear-gradient(#1e1e1e,#383838);"></div>
<div class="t" style="left:665px;top:184.69px;font-size:11px;line-height:11px;color:#e0e0e0;letter-spacing:-0.15px;">ve</div>
<div class="t" style="left:679px;top:184.69px;font-size:11px;line-height:11px;color:#e0e0e0;letter-spacing:-0.15px;">]</div>
<div class="t" style="left:686.5px;top:184.69px;font-size:11px;line-height:11px;color:#e0e0e0;letter-spacing:-0.15px;">[</div>
<div class="t" style="left:690.7px;top:184.69px;font-size:11px;line-height:11px;color:#e0e0e0;letter-spacing:-0.15px;">Standard</div>
<div class="t" style="left:737.8px;top:184.69px;font-size:11px;line-height:11px;color:#e0e0e0;letter-spacing:-0.15px;">]</div>
<div class="t" style="left:745.8px;top:184.69px;font-size:11px;line-height:11px;color:#e0e0e0;letter-spacing:-0.15px;">[</div>
<div class="t" style="left:750px;top:184.69px;font-size:11px;line-height:11px;color:#e0e0e0;letter-spacing:-0.15px;">Default</div>
<svg style="position:absolute;left:590px;top:177px;" width="183" height="588" viewBox="0 0 183 588"><g stroke="#f0f0f0" stroke-width="1.1" fill="none"><path d="M74 245L183 225"/><path d="M74 255L183 284.7"/><path d="M74.1 443.1L82.6 505L183 480.6M82.6 505L183 541.5"/></g></svg>
<div style="position:absolute;left:306.5px;top:16.5px;width:192.5px;height:437.5px;background:#535353;border-left:1px solid #333;box-sizing:border-box;"></div>
<div style="position:absolute;left:499px;top:19px;width:2px;height:437px;background:#2e2e2e;"></div>
<div style="position:absolute;left:309px;top:454px;width:190px;height:2px;background:#2e2e2e;"></div>
<div style="position:absolute;left:309px;top:19px;width:188px;height:1px;background:repeating-linear-gradient(90deg,#c8c8c8 0 1px,transparent 1px 2px);"></div>
<div style="position:absolute;left:310px;top:21px;width:187px;height:1px;background:repeating-linear-gradient(90deg,#c8c8c8 0 1px,transparent 1px 2px);"></div>
<div style="position:absolute;left:307.5px;top:80.5px;width:191.5px;height:20.5px;background:#5b8cc9;"></div>
<div style="position:absolute;left:312px;top:54px;width:183px;height:1px;background:#636363;"></div>
<div style="position:absolute;left:312px;top:104px;width:183px;height:1px;background:#636363;"></div>
<div style="position:absolute;left:312px;top:131px;width:183px;height:1px;background:#636363;"></div>
<div style="position:absolute;left:312px;top:158px;width:183px;height:1px;background:#636363;"></div>
<div style="position:absolute;left:312px;top:185px;width:183px;height:1px;background:#636363;"></div>
<div style="position:absolute;left:312px;top:212px;width:183px;height:1px;background:#636363;"></div>
<div style="position:absolute;left:312px;top:239px;width:183px;height:1px;background:#636363;"></div>
<div style="position:absolute;left:312px;top:266px;width:183px;height:1px;background:#636363;"></div>
<div style="position:absolute;left:312px;top:293px;width:183px;height:1px;background:#636363;"></div>
<div style="position:absolute;left:312px;top:320px;width:183px;height:1px;background:#636363;"></div>
<div style="position:absolute;left:312px;top:347px;width:183px;height:1px;background:#636363;"></div>
<div style="position:absolute;left:312px;top:374px;width:183px;height:1px;background:#636363;"></div>
<div style="position:absolute;left:312px;top:401px;width:183px;height:1px;background:#636363;"></div>
<div style="position:absolute;left:312px;top:428px;width:183px;height:1px;background:#636363;"></div>
<div class="t" style="left:331.3px;top:37.29px;font-size:11px;line-height:11px;color:#f2f2f2;letter-spacing:-0.15px;">Selection Modifiers</div>
<svg style="position:absolute;left:488.5px;top:36.6px;" width="6" height="9" viewBox="0 0 6 9"><path d="M0.5 0.5L5.5 4.5L0.5 8.5Z" fill="#cfcfcf"/></svg>
<div class="t" style="left:331.3px;top:64.19px;font-size:11px;line-height:11px;color:#f2f2f2;letter-spacing:-0.15px;"><u style="text-decoration-thickness:1px;text-underline-offset:2px">P</u>atch/Spline Editing</div>
<svg style="position:absolute;left:488.5px;top:63.5px;" width="6" height="9" viewBox="0 0 6 9"><path d="M0.5 0.5L5.5 4.5L0.5 8.5Z" fill="#cfcfcf"/></svg>
<div class="t" style="left:331.3px;top:87.29px;font-size:11px;line-height:11px;color:#f2f2f2;letter-spacing:-0.15px;"><u style="text-decoration-thickness:1px;text-underline-offset:2px">M</u>esh Editing</div>
<svg style="position:absolute;left:488.5px;top:86.6px;" width="6" height="9" viewBox="0 0 6 9"><path d="M0.5 0.5L5.5 4.5L0.5 8.5Z" fill="#cfcfcf"/></svg>
<div class="t" style="left:331.3px;top:114.19px;font-size:11px;line-height:11px;color:#f2f2f2;letter-spacing:-0.15px;">Conversion</div>
<svg style="position:absolute;left:488.5px;top:113.5px;" width="6" height="9" viewBox="0 0 6 9"><path d="M0.5 0.5L5.5 4.5L0.5 8.5Z" fill="#cfcfcf"/></svg>
<div class="t" style="left:331.3px;top:141.19px;font-size:11px;line-height:11px;color:#f2f2f2;letter-spacing:-0.15px;">Animation</div>
<svg style="position:absolute;left:488.5px;top:140.5px;" width="6" height="9" viewBox="0 0 6 9"><path d="M0.5 0.5L5.5 4.5L0.5 8.5Z" fill="#cfcfcf"/></svg>
<div class="t" style="left:331.3px;top:168.19px;font-size:11px;line-height:11px;color:#f2f2f2;letter-spacing:-0.15px;">Cloth</div>
<svg style="position:absolute;left:488.5px;top:167.5px;" width="6" height="9" viewBox="0 0 6 9"><path d="M0.5 0.5L5.5 4.5L0.5 8.5Z" fill="#cfcfcf"/></svg>
<div class="t" style="left:331.3px;top:195.19px;font-size:11px;line-height:11px;color:#f2f2f2;letter-spacing:-0.15px;">Hair and Fur</div>
<svg style="position:absolute;left:488.5px;top:194.5px;" width="6" height="9" viewBox="0 0 6 9"><path d="M0.5 0.5L5.5 4.5L0.5 8.5Z" fill="#cfcfcf"/></svg>
<div class="t" style="left:331.3px;top:222.19px;font-size:11px;line-height:11px;color:#f2f2f2;letter-spacing:-0.15px;">UV Coordinates</div>
<svg style="position:absolute;left:488.5px;top:221.5px;" width="6" height="9" viewBox="0 0 6 9"><path d="M0.5 0.5L5.5 4.5L0.5 8.5Z" fill="#cfcfcf"/></svg>
<div class="t" style="left:331.3px;top:249.19px;font-size:11px;line-height:11px;color:#f2f2f2;letter-spacing:-0.15px;">Cache Tools</div>
<svg style="position:absolute;left:488.5px;top:248.5px;" width="6" height="9" viewBox="0 0 6 9"><path d="M0.5 0.5L5.5 4.5L0.5 8.5Z" fill="#cfcfcf"/></svg>
<div class="t" style="left:331.3px;top:276.19px;font-size:11px;line-height:11px;color:#f2f2f2;letter-spacing:-0.15px;">Subdivision Surfaces</div>
<svg style="position:absolute;left:488.5px;top:275.5px;" width="6" height="9" viewBox="0 0 6 9"><path d="M0.5 0.5L5.5 4.5L0.5 8.5Z" fill="#cfcfcf"/></svg>
<div class="t" style="left:331.3px;top:303.19px;font-size:11px;line-height:11px;color:#f2f2f2;letter-spacing:-0.15px;">Free Form Deformers</div>
<svg style="position:absolute;left:488.5px;top:302.5px;" width="6" height="9" viewBox="0 0 6 9"><path d="M0.5 0.5L5.5 4.5L0.5 8.5Z" fill="#cfcfcf"/></svg>
<div class="t" style="left:331.3px;top:330.19px;font-size:11px;line-height:11px;color:#f2f2f2;letter-spacing:-0.15px;">Parametric <u style="text-decoration-thickness:1px;text-underline-offset:2px">D</u>eformers</div>
<svg style="position:absolute;left:488.5px;top:329.5px;" width="6" height="9" viewBox="0 0 6 9"><path d="M0.5 0.5L5.5 4.5L0.5 8.5Z" fill="#cfcfcf"/></svg>
<div class="t" style="left:331.3px;top:357.19px;font-size:11px;line-height:11px;color:#f2f2f2;letter-spacing:-0.15px;">Surface</div>
<svg style="position:absolute;left:488.5px;top:356.5px;" width="6" height="9" viewBox="0 0 6 9"><path d="M0.5 0.5L5.5 4.5L0.5 8.5Z" fill="#cfcfcf"/></svg>
<div class="t" style="left:331.3px;top:384.19px;font-size:11px;line-height:11px;color:#f2f2f2;letter-spacing:-0.15px;"><u style="text-decoration-thickness:1px;text-underline-offset:2px">N</u>URBS Editing</div>
<svg style="position:absolute;left:488.5px;top:383.5px;" width="6" height="9" viewBox="0 0 6 9"><path d="M0.5 0.5L5.5 4.5L0.5 8.5Z" fill="#cfcfcf"/></svg>
<div class="t" style="left:331.3px;top:411.19px;font-size:11px;line-height:11px;color:#f2f2f2;letter-spacing:-0.15px;">Radiosity</div>
<svg style="position:absolute;left:488.5px;top:410.5px;" width="6" height="9" viewBox="0 0 6 9"><path d="M0.5 0.5L5.5 4.5L0.5 8.5Z" fill="#cfcfcf"/></svg>
<div class="t" style="left:331.3px;top:438.19px;font-size:11px;line-height:11px;color:#f2f2f2;letter-spacing:-0.15px;">Cameras</div>
<svg style="position:absolute;left:488.5px;top:437.5px;" width="6" height="9" viewBox="0 0 6 9"><path d="M0.5 0.5L5.5 4.5L0.5 8.5Z" fill="#cfcfcf"/></svg>
<div style="position:absolute;left:501px;top:78px;width:2.3px;height:452px;background:#2c2c2c;"></div>
<div style="position:absolute;left:503px;top:78px;width:160px;height:452px;background:#535353;box-shadow:2px 2px 2px rgba(0,0,0,.45);"></div>
<div style="position:absolute;left:505px;top:82px;width:156px;height:1px;background:repeating-linear-gradient(90deg,#c8c8c8 0 1px,transparent 1px 2px);"></div>
<div style="position:absolute;left:506px;top:84px;width:155px;height:1px;background:repeating-linear-gradient(90deg,#c8c8c8 0 1px,transparent 1px 2px);"></div>
<div style="position:absolute;left:503px;top:346.8px;width:160px;height:20.2px;background:#5b8cc9;"></div>
<div class="t" style="left:527.5px;top:100.09px;font-size:11px;line-height:11px;color:#f2f2f2;letter-spacing:-0.3px;">Cap Holes</div>
<svg style="position:absolute;left:508px;top:96px;" width="16" height="16" viewBox="0 0 16 16"><path d="M1 11.5C1 15 15 15 15 11.5V9H1Z" fill="#e2e2e2"/><path d="M1 5V10C1 12.5 15 12.5 15 10V5Z" fill="#2d3d3c"/><ellipse cx="8" cy="5" rx="7" ry="3.5" fill="#45c4b8"/><path d="M4 9L10 12L15 9V7L10 10Z" fill="#45c4b8"/></svg>
<div class="t" style="left:527.5px;top:123.09px;font-size:11px;line-height:11px;color:#f2f2f2;letter-spacing:-0.3px;">Chamfer</div>
<svg style="position:absolute;left:508px;top:119px;" width="16" height="16" viewBox="0 0 16 16"><rect x="0.5" y="0.5" width="15" height="15" rx="1.5" fill="#2a8f86"/><path d="M0.5 0.5L4 4M15.5 0.5L12 4M0.5 15.5L4 12M15.5 15.5L12 12" stroke="#45c4b8" stroke-width="1.5"/><rect x="2" y="2" width="12" height="12" fill="none" stroke="#45c4b8" stroke-width="1.5"/><rect x="4.5" y="4.5" width="7" height="7" fill="#e2e2e2"/></svg>
<div class="t" style="left:527.5px;top:146.09px;font-size:11px;line-height:11px;color:#f2f2f2;letter-spacing:-0.3px;">Delete Mesh</div>
<svg style="position:absolute;left:508px;top:142px;" width="16" height="16" viewBox="0 0 16 16"><rect x="2" y="2" width="12" height="12" fill="#2b6f6a" stroke="#45c4b8" stroke-width="1"/><path d="M2 2L14 14M14 2L2 14" stroke="#45c4b8" stroke-width="0.8"/><circle cx="7" cy="7" r="2" fill="#e2e2e2"/><g fill="#e2e2e2"><rect x="0" y="0" width="3" height="3"/><rect x="13" y="0" width="3" height="3"/><rect x="0" y="13" width="3" height="3"/></g><rect x="9" y="9" width="6" height="6" fill="#e8a21c"/><rect x="11" y="11" width="2" height="2" fill="#7a4a00"/></svg>
<div class="t" style="left:527.5px;top:169.09px;font-size:11px;line-height:11px;color:#f2f2f2;letter-spacing:-0.3px;"><u style="text-decoration-thickness:1px;text-underline-offset:2px">E</u>dit Mesh</div>
<svg style="position:absolute;left:508px;top:165px;" width="16" height="16" viewBox="0 0 16 16"><path d="M0.5 9L13 1L11 8L3 12Z" fill="#45c4b8"/><path d="M0.5 9L3 12L2 13Z" fill="#2a8f86"/><path d="M5 15L15 6" stroke="#e8c030" stroke-width="2"/></svg>
<div class="t" style="left:527.5px;top:192.09px;font-size:11px;line-height:11px;color:#f2f2f2;letter-spacing:-0.3px;">Edit Normals</div>
<svg style="position:absolute;left:508px;top:188px;" width="16" height="16" viewBox="0 0 16 16"><path d="M1 13L8 6L15 13Z" fill="none" stroke="#e2e2e2" stroke-width="1.5"/><path d="M8 1V7M6 3L8 1L10 3" stroke="#e2e2e2" stroke-width="1.3" fill="none"/><path d="M5 15L15 7" stroke="#e8a21c" stroke-width="2.2"/></svg>
<div class="t" style="left:527.5px;top:215.09px;font-size:11px;line-height:11px;color:#f2f2f2;letter-spacing:-0.3px;">Edit Poly</div>
<svg style="position:absolute;left:508px;top:211px;" width="16" height="16" viewBox="0 0 16 16"><rect x="0.5" y="0.5" width="15" height="15" fill="#45c4b8"/><path d="M6 15L15 6" stroke="#e8c030" stroke-width="2.2"/><path d="M4 16L6 14" stroke="#333" stroke-width="1.5"/></svg>
<div class="t" style="left:527.5px;top:238.09px;font-size:11px;line-height:11px;color:#8a8a8a;letter-spacing:-0.3px;">Extrude</div>
<svg style="position:absolute;left:508px;top:234px;" width="16" height="16" viewBox="0 0 16 16"><rect x="1.5" y="1" width="13" height="12" fill="#3a3a3a" stroke="#2c2c2c" stroke-width="1"/><rect x="0" y="13" width="16" height="2" fill="#2c2c2c"/></svg>
<div class="t" style="left:527.5px;top:261.09px;font-size:11px;line-height:11px;color:#f2f2f2;letter-spacing:-0.3px;">Face Extrude</div>
<svg style="position:absolute;left:508px;top:257px;" width="16" height="16" viewBox="0 0 16 16"><path d="M0.5 7L15 1L13 9L3 12Z" fill="#45c4b8"/><path d="M0.5 7L13 9L13 12L3 10Z" fill="#e2e2e2"/><path d="M3 10V16L7 12Z" fill="#45c4b8"/></svg>
<div class="t" style="left:527.5px;top:284.09px;font-size:11px;line-height:11px;color:#f2f2f2;letter-spacing:-0.3px;">MultiRes</div>
<svg style="position:absolute;left:508px;top:280px;" width="16" height="16" viewBox="0 0 16 16"><g fill="#e2e2e2"><rect x="0" y="7" width="4" height="4"/><rect x="0" y="12" width="4" height="4"/><rect x="5" y="12" width="4" height="4"/><rect x="5" y="7" width="3" height="3"/></g><g fill="#cfcfcf"><rect x="7" y="1" width="2" height="2"/><rect x="10" y="1" width="2" height="2"/><rect x="13" y="1" width="2" height="2"/><rect x="10" y="4" width="2" height="2"/><rect x="13" y="4" width="2" height="2"/><rect x="7" y="4" width="2" height="2"/><rect x="10" y="7" width="2" height="2"/><rect x="13" y="7" width="2" height="2"/><rect x="13" y="10" width="2" height="2"/><rect x="10" y="10" width="2" height="2"/></g></svg>
<div class="t" style="left:527.5px;top:307.09px;font-size:11px;line-height:11px;color:#f2f2f2;letter-spacing:-0.3px;">Normal Modifier</div>
<svg style="position:absolute;left:508px;top:303px;" width="16" height="16" viewBox="0 0 16 16"><path d="M1 14L8 6L15 14" fill="none" stroke="#45c4b8" stroke-width="1.3" stroke-dasharray="1.5 1"/><path d="M2 12H14" stroke="#e2e2e2" stroke-width="1.5"/><path d="M8 1V11M5.5 4L8 1L10.5 4" stroke="#e2e2e2" stroke-width="1.6" fill="none"/></svg>
<div class="t" style="left:527.5px;top:330.09px;font-size:11px;line-height:11px;color:#f2f2f2;letter-spacing:-0.3px;"><u style="text-decoration-thickness:1px;text-underline-offset:2px">O</u>ptimize</div>
<svg style="position:absolute;left:508px;top:326px;" width="16" height="16" viewBox="0 0 16 16"><rect x="6" y="1" width="9" height="9" fill="#d0d0d0"/><path d="M6 1L15 10" stroke="#555" stroke-width="1"/><g fill="#e2e2e2"><rect x="1" y="5" width="4" height="4"/><rect x="1" y="11" width="4" height="4"/><rect x="6" y="11" width="4" height="4"/></g><circle cx="3" cy="13" r="1" fill="#555"/></svg>
<div class="t" style="left:527.5px;top:353.09px;font-size:11px;line-height:11px;color:#f2f2f2;letter-spacing:-0.3px;">ProOptimizer</div>
<svg style="position:absolute;left:508px;top:349px;" width="16" height="16" viewBox="0 0 16 16"><circle cx="10.5" cy="6" r="6" fill="#45c4b8"/><path d="M6.5 8.5L13 2M8.5 10.5L15 4" stroke="#6ad8cc" stroke-width="1.3"/><circle cx="5.5" cy="11" r="5" fill="#2fa89c"/><path d="M5.5 6.5V9.5M5.5 12.5V15.5M1 11H4M7 11H10M2.5 8L4.3 9.8M6.7 12.2L8.5 14M8.5 8L6.7 9.8M4.3 12.2L2.5 14" stroke="#1d4f4a" stroke-width="1"/></svg>
<div class="t" style="left:527.5px;top:376.09px;font-size:11px;line-height:11px;color:#f2f2f2;letter-spacing:-0.3px;">Quadify Mesh</div>
<div class="t" style="left:527.5px;top:399.09px;font-size:11px;line-height:11px;color:#f2f2f2;letter-spacing:-0.3px;">Smooth</div>
<svg style="position:absolute;left:508px;top:395px;" width="16" height="16" viewBox="0 0 16 16"><g fill="none" stroke="#45c4b8" stroke-width="1"><circle cx="3" cy="2.5" r="1.6"/><circle cx="8" cy="2.5" r="1.6"/><circle cx="13" cy="2.5" r="1.6"/></g><g fill="#e2e2e2"><rect x="0.5" y="6" width="4" height="4"/><rect x="6" y="6" width="4" height="4"/><rect x="11.5" y="6" width="4" height="4"/><rect x="0.5" y="11.5" width="4" height="4"/><rect x="6" y="11.5" width="4" height="4"/><rect x="11.5" y="11.5" width="4" height="4"/></g></svg>
<div class="t" style="left:527.5px;top:422.09px;font-size:11px;line-height:11px;color:#f2f2f2;letter-spacing:-0.3px;">S<u style="text-decoration-thickness:1px;text-underline-offset:2px">T</u>L Check</div>
<svg style="position:absolute;left:508px;top:418px;" width="16" height="16" viewBox="0 0 16 16"><text x="0" y="7" font-family="Liberation Sans" font-weight="bold" font-size="8" fill="#e2e2e2">STL</text><path d="M3 10L7 15L15 5" stroke="#45c4b8" stroke-width="2.2" fill="none"/></svg>
<div class="t" style="left:527.5px;top:445.09px;font-size:11px;line-height:11px;color:#f2f2f2;letter-spacing:-0.3px;">Symmetry</div>
<svg style="position:absolute;left:508px;top:441px;" width="16" height="16" viewBox="0 0 16 16"><path d="M0.5 4.5H5.5M10.5 4.5H15.5M3.5 4V15M12.5 4V15" stroke="#e2e2e2" stroke-width="2"/><path d="M6.8 1V15M9.2 1V15" stroke="#45c4b8" stroke-width="1.6"/><path d="M8 3V5M8 7V9M8 11V13" stroke="#2a3a3a" stroke-width="1"/></svg>
<div class="t" style="left:527.5px;top:468.09px;font-size:11px;line-height:11px;color:#f2f2f2;letter-spacing:-0.3px;">Tessellate</div>
<svg style="position:absolute;left:508px;top:464px;" width="16" height="16" viewBox="0 0 16 16"><path d="M8 1L15 14L8 12L1 14Z" fill="#e2e2e2"/><path d="M8 3.5V9M8 9L3 12.8M8 9L13 12.8" stroke="#4a4a4a" stroke-width="1.1"/></svg>
<div class="t" style="left:527.5px;top:491.09px;font-size:11px;line-height:11px;color:#f2f2f2;letter-spacing:-0.3px;">Vertex Paint</div>
<svg style="position:absolute;left:508px;top:487px;" width="16" height="16" viewBox="0 0 16 16"><path d="M1 2L2 4L1 6L3 5L5 6L4 4L5 2L3 3Z" fill="#e2e2e2" transform="scale(0.9)"/><path d="M12 0L13 2L15 3L13 4L12 6L11 4L9 3L11 2Z" fill="#e2e2e2"/><path d="M4 15L13 6" stroke="#e8c030" stroke-width="2.4"/><path d="M3 12L6 11" stroke="#d9a" stroke-width="1.5"/></svg>
<div class="t" style="left:527.5px;top:514.09px;font-size:11px;line-height:11px;color:#f2f2f2;letter-spacing:-0.3px;">Vertex Weld</div>
<svg style="position:absolute;left:508px;top:510px;" width="16" height="16" viewBox="0 0 16 16"><path d="M0 3L2 2.5L2.5 0.5L3 2.5L5 3L3 3.5L2.5 5.5L2 3.5Z" fill="#e2e2e2"/><path d="M12 0L13 2L15 3L13 4L12 6L11 4L9 3L11 2Z" fill="#e2e2e2"/><path d="M6 11L8 9L10 11L8 13Z" fill="#d9a"/><rect x="10" y="9" width="5" height="7" rx="1" fill="#e8c030"/><rect x="11.5" y="6.5" width="2" height="3" fill="#e8c030"/></svg>
<div style="position:absolute;left:607px;top:380px;width:114px;height:17.5px;background:#ffffff;border:1px solid #767676;box-sizing:border-box;box-shadow:2px 2px 2px rgba(0,0,0,.4);"></div>
<div class="t" style="left:611px;top:383.69px;font-size:11px;line-height:11px;color:#575757;letter-spacing:-0.2px;">ProOptimizer Modifier</div>
<svg style="position:absolute;left:0;top:0" width="773" height="765"><path d="M184.5 137.3L295.2 95.4" stroke="#2020ff" stroke-width="5.5"/><path d="M318 86L291 84L299.4 106.8Z" fill="#2020ff"/></svg>
<svg style="position:absolute;left:0;top:0" width="773" height="765"><path d="M405 440L489.25 377.35" stroke="#2020ff" stroke-width="5.5"/><path d="M508.6 362.7L481.7 367.7L496.8 387Z" fill="#2020ff"/></svg>
<svg style="position:absolute;left:0;top:0" width="773" height="765"><path d="M86.3 709.7L165.1 678.4" stroke="#2020ff" stroke-width="5.5"/><path d="M187.7 669L160.6 667L169.6 689.8Z" fill="#2020ff"/></svg>
</body></html>
